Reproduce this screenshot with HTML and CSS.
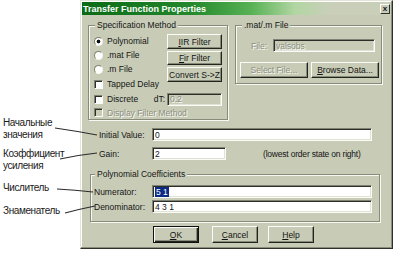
FILE: index.html
```html
<!DOCTYPE html>
<html lang="en">
<head>
  <meta charset="UTF-8" />
  <title>Transfer Function Properties</title>
  <link rel="stylesheet" href="styles.css">
</head>
<body>
  <div class="page">
    <div class="notes">
      <p class="note">Начальные<br />значения</p>
      <p class="note note-gain">Коэффициент<br />усиления</p>
      <p class="note note-num">Числитель</p>
      <p class="note note-den">Знаменатель</p>
    </div>

    <div class="dialog">
      <div class="titlebar">
        <span class="title">Transfer Function Properties</span>
        <span class="close">x</span>
      </div>

      <div class="top-row">
        <div class="group group-spec">
          <div class="group-label">Specification Method</div>
          <div class="spec-main">
            <div class="spec-opts">
              <div class="opt"><span class="radio checked"></span>Polynomial</div>
              <div class="opt"><span class="radio"></span>.mat File</div>
              <div class="opt"><span class="radio"></span>.m File</div>
              <div class="opt opt-gap"><span class="check"></span>Tapped Delay</div>
            </div>
            <div class="spec-btns">
              <div class="btn btn-spec"><u>I</u>IR Filter</div>
              <div class="btn btn-spec btn-fir"><u>F</u>ir Filter</div>
              <div class="btn btn-spec">Convert S-&gt;Z</div>
            </div>
          </div>
          <div class="opt opt-row discrete-row">
            <span class="check"></span>Discrete
            <span class="dt-label">dT:</span>
            <span class="field field-off field-dt">0.2</span>
          </div>
          <div class="opt opt-row opt-last off">
            <span class="check check-off"></span>Display Filter Method
          </div>
        </div>

        <div class="group group-file">
          <div class="group-label">.mat/.m File</div>
          <div class="file-row">
            <span class="file-label off">File:</span>
            <span class="field field-off field-file">valsobs</span>
          </div>
          <div class="file-btns">
            <div class="btn btn-file off">Select File...</div>
            <div class="btn btn-file"><u>B</u>rowse Data...</div>
          </div>
        </div>
      </div>

      <div class="form-row row-init">
        <span class="form-label">Initial Value:</span>
        <span class="field field-wide">0</span>
      </div>
      <div class="form-row row-gain">
        <span class="form-label">Gain:</span>
        <span class="field field-gain">2</span>
        <span class="hint">(lowest order state on right)</span>
      </div>

      <div class="group group-poly">
        <div class="group-label">Polynomial Coefficients</div>
        <div class="poly-row">
          <span class="poly-label">Numerator:</span>
          <span class="field field-wide"><span class="sel">5 1</span></span>
        </div>
        <div class="poly-row">
          <span class="poly-label">Denominator:</span>
          <span class="field field-wide">4 3 1</span>
        </div>
      </div>

      <div class="actions">
        <div class="btn btn-act btn-default"><u>O</u>K</div>
        <div class="btn btn-act btn-cancel"><u>C</u>ancel</div>
        <div class="btn btn-act btn-help"><u>H</u>elp</div>
      </div>
    </div>

    <!-- callout lines from the russian notes to the fields -->
    <svg class="callouts" width="396" height="254" viewBox="0 0 396 254">
      <path d="M55 128 Q76 131 97 135" />
      <path d="M60 159 Q78 155 97 153" />
      <path d="M57 189 Q75 190 93 192" />
      <path d="M65 213 Q80 209 95 206" />
    </svg>
  </div>
</body>
</html>
```

FILE: styles.css
```css
body {
  margin: 0;
  background: #fff;
  font-family: "Liberation Sans", Arial, sans-serif;
}

.page {
  position: relative;
  display: flex;
  width: 396px;
  height: 254px;
}

/* notes on the left */
.notes {
  width: 80px;
  padding: 117px 0 0 3px;
  box-sizing: border-box;
  color: #1a1a1a;
  font-size: 10px;
  line-height: 12px;
  letter-spacing: -0.4px;
}

.note {
  margin: 0;
}

.note-gain { margin-top: 7px; }
.note-num { margin-top: 10px; }
.note-den { margin-top: 11px; }

.callouts {
  position: absolute;
  left: 0;
  top: 0;
  pointer-events: none;
}

.callouts path {
  fill: none;
  stroke: #2a2a2a;
  stroke-width: 1.1;
}

/* dialog */
.dialog {
  width: 313px;
  height: 249px;
  box-sizing: border-box;
  padding: 1px;
  background: #c8ccb7;
  border: 1px solid;
  border-color: #e2e5d8 #2f3129 #2f3129 #e2e5d8;
  box-shadow: inset -1px -1px 0 #8b8f7e, inset 1px 1px 0 #fff;
  font-size: 8.5px;
  color: #141414;
}

.titlebar {
  display: flex;
  align-items: center;
  justify-content: space-between;
  height: 13px;
  padding: 0 1px 0 1px;
  background: linear-gradient(to right, #0b6b16 0%, #23872c 35%, #58b255 55%, #b2d6a3 69%, #c9cfb9 80%, #c9cfb9 100%);
}

.title {
  color: #fff;
  font-weight: bold;
  font-size: 9px;
}

.close {
  width: 10px;
  height: 10px;
  box-sizing: border-box;
  background: #c8ccb7;
  border: 1px solid;
  border-color: #fff #2f3129 #2f3129 #fff;
  font-weight: bold;
  font-size: 8px;
  line-height: 7px;
  text-align: center;
}

/* group boxes */
.group {
  box-sizing: border-box;
  border: 1px solid #878b7a;
  box-shadow: inset 1px 1px 0 #f7f8f2, 1px 1px 0 #f7f8f2;
}

.group-label {
  width: fit-content;
  margin: -6px 0 0 6px;
  padding: 0 2px;
  background: #c8ccb7;
  line-height: 11px;
}

.top-row {
  display: flex;
  align-items: flex-start;
  gap: 7px;
  margin: 10px 0 0 6px;
}

.group-spec { width: 140px; }
.group-file { width: 147px; }

.spec-main {
  display: flex;
  margin-top: 3px;
}

.spec-opts {
  width: 78px;
  padding-left: 5px;
  box-sizing: border-box;
}

.opt {
  display: flex;
  align-items: center;
  height: 14px;
  white-space: nowrap;
}

.opt-gap { margin-top: 1px; }

.opt-row {
  padding: 0 5px;
}

.discrete-row { margin-top: 1px; }
.opt-last { height: 13px; }

.dt-label {
  margin-left: auto;
  margin-right: 2px;
}

.spec-btns {
  display: flex;
  flex-direction: column;
  gap: 2px;
  width: 55px;
}

.radio {
  width: 9px;
  height: 9px;
  margin-right: 4px;
  box-sizing: border-box;
  border-radius: 50%;
  background: #fff;
  border: 1px solid;
  border-color: #7f8373 #f4f5ef #f4f5ef #7f8373;
}

.radio.checked {
  background: radial-gradient(circle, #111 0 1.6px, #fff 2.2px);
}

.check {
  width: 9px;
  height: 9px;
  margin-right: 4px;
  box-sizing: border-box;
  background: #fff;
  border: 1px solid;
  border-color: #7f8373 #fbfcf7 #fbfcf7 #7f8373;
  box-shadow: inset 1px 1px 0 #2c2e27;
}

.check-off { background: #c8ccb7; }

.off {
  color: #8b8f80;
  text-shadow: 1px 1px 0 #fbfcf7;
}

/* text fields */
.field {
  display: flex;
  align-items: center;
  height: 13px;
  box-sizing: border-box;
  padding-left: 2px;
  background: #fff;
  border: 1px solid;
  border-color: #7f8373 #fbfcf7 #fbfcf7 #7f8373;
  box-shadow: inset 1px 1px 0 #2c2e27, inset -1px -1px 0 #dfe2d5;
  white-space: nowrap;
}

.field-off {
  background: #c8ccb7;
  color: #8b8f80;
  text-shadow: 1px 1px 0 #fbfcf7;
}

.field-dt { width: 55px; }
.field-file { width: 102px; }
.field-wide { width: 220px; }
.field-gain { width: 74px; }

.sel {
  background: #0c2a84;
  color: #fff;
  padding: 0 1px;
}

.file-row {
  display: flex;
  align-items: center;
  margin-top: 8px;
  padding-left: 15px;
}

.file-label { width: 22px; }

.file-btns {
  display: flex;
  gap: 3px;
  margin-top: 10px;
  padding: 0 0 5px 4px;
}

/* buttons */
.btn {
  display: flex;
  align-items: center;
  justify-content: center;
  box-sizing: border-box;
  background: #c8ccb7;
  border: 1px solid;
  border-color: #fbfcf7 #22241e #22241e #fbfcf7;
  box-shadow: inset -1px -1px 0 #878b7a;
  white-space: nowrap;
}

.btn-spec { height: 15px; }
.btn-fir { height: 14px; }
.btn-file { width: 68px; height: 16px; }

.btn-act {
  width: 46px;
  height: 17px;
}

.btn-default {
  border-color: #111;
  box-shadow: inset 1px 1px 0 #fbfcf7, inset -1px -1px 0 #22241e, inset -2px -2px 0 #878b7a;
}

.btn-cancel { margin-left: 13px; }
.btn-help { margin-left: 10px; }

/* lower rows */
.form-row {
  display: flex;
  align-items: center;
  padding-left: 17px;
}

.row-init { margin-top: 8px; }
.row-gain { margin-top: 6px; }

.form-label { width: 53px; }

.hint {
  margin-left: 37px;
  letter-spacing: -0.2px;
}

.group-poly {
  width: 290px;
  margin: 14px 0 0 8px;
  padding-bottom: 8px;
}

.group-poly .group-label { margin-left: 4px; }

.poly-row {
  display: flex;
  align-items: center;
  margin-top: 5px;
  padding-left: 3px;
}

.poly-row + .poly-row { margin-top: 2px; }

.poly-label { width: 58px; }

.actions {
  display: flex;
  margin-top: 4px;
  padding-left: 71px;
}
```
